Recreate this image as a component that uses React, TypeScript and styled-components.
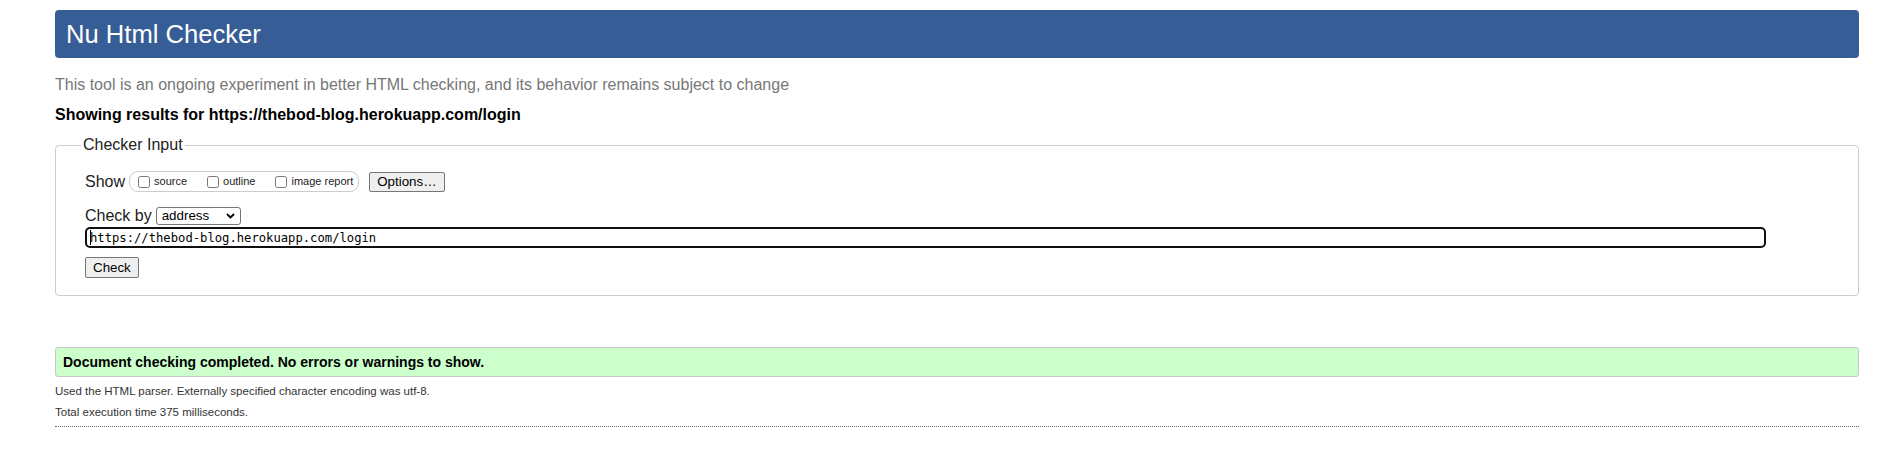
import React from "react";
import styled, { createGlobalStyle } from "styled-components";

const GlobalStyle = createGlobalStyle`
  html, body {
    margin: 0;
    padding: 0;
    background: #ffffff;
  }
  body {
    font-family: "Liberation Sans", Arial, sans-serif;
    color: #000000;
  }
`;

const Page = styled.div`
  padding: 10px 34px 0 55px;
`;

const Header = styled.h1`
  margin: 0;
  height: 48px;
  line-height: 48px;
  padding: 0 0 0 11px;
  background: #365d95;
  border-radius: 4px;
  color: #ffffff;
  font-size: 25.6px;
  font-weight: normal;
`;

const About = styled.p`
  margin: 18px 0 0;
  font-size: 16px;
  line-height: 18px;
  color: #777777;
`;

const ShowingFor = styled.p`
  margin: 12px 0 0;
  font-size: 16px;
  line-height: 18px;
  font-weight: bold;
  color: #000000;
`;

const Fieldset = styled.fieldset`
  margin: 12px 0 0;
  padding: 17px 29px 17px 29px;
  border: 1px solid #cdcdcd;
  border-radius: 4px;
  min-width: 0;
`;

const Legend = styled.legend`
  margin-left: -4px;
  padding: 0 2px;
  font-size: 16px;
  line-height: 18px;
  color: #222222;
`;

const Row = styled.div<{ $mt?: number }>`
  display: flex;
  align-items: center;
  height: 21px;
  margin-top: ${(p) => p.$mt ?? 0}px;
`;

const RowLabel = styled.span`
  font-size: 16px;
  line-height: 18px;
  color: #222222;
`;

const OptionGroup = styled.span`
  display: inline-flex;
  align-items: center;
  box-sizing: border-box;
  height: 21px;
  margin-left: 4px;
  padding: 0 5px 0 8px;
  border: 1px solid #cccccc;
  border-radius: 9px;
  gap: 20px;
`;

const OptionItem = styled.label`
  display: inline-flex;
  align-items: center;
  font-size: 11px;
  line-height: 13px;
  color: #222222;
`;

const Checkbox = styled.input.attrs({ type: "checkbox" })`
  width: 12px;
  height: 12px;
  margin: 0 4px 0 0;
`;

const Button = styled.button<{ $ml?: number; $h?: number }>`
  box-sizing: border-box;
  height: ${(p) => p.$h ?? 21}px;
  margin-left: ${(p) => p.$ml ?? 0}px;
  padding: 0 7px;
  font-family: "Liberation Sans", Arial, sans-serif;
  font-size: 13.33px;
  color: #000000;
  background: #efefef;
  border: 1px solid #767676;
  border-radius: 2px;
`;

const SelectWrap = styled.span`
  position: relative;
  display: inline-flex;
  margin-left: 4px;
`;

const Select = styled.select`
  appearance: none;
  -webkit-appearance: none;
  box-sizing: border-box;
  width: 85px;
  height: 18px;
  padding: 0 0 0 5px;
  font-family: "Liberation Sans", Arial, sans-serif;
  font-size: 13.33px;
  color: #000000;
  background: #ffffff;
  border: 1px solid #767676;
  border-radius: 3px;
`;

const Chevron = styled.svg`
  position: absolute;
  right: 6px;
  top: 6px;
  pointer-events: none;
`;

const UrlWrap = styled.div`
  position: relative;
  margin-top: 1px;
  width: 1681px;
`;

const UrlInput = styled.input`
  box-sizing: border-box;
  display: block;
  width: 100%;
  height: 21px;
  padding: 0 3px;
  font-family: "DejaVu Sans Mono", "Liberation Mono", monospace;
  font-size: 12.2px;
  color: #000000;
  background: #ffffff;
  border: 2px solid #101010;
  border-radius: 5px;
  outline: none;
`;

const Caret = styled.span`
  position: absolute;
  left: 5px;
  top: 3px;
  width: 1px;
  height: 15px;
  background: #000000;
`;

const Results = styled.section`
  margin: 51px 0 0;
`;

const Success = styled.p`
  box-sizing: border-box;
  margin: 0;
  height: 30px;
  padding: 0 7px;
  line-height: 28px;
  font-size: 14px;
  font-weight: bold;
  color: #000000;
  background: #ccffcc;
  border: 1px solid #c8c8c8;
  border-radius: 3px;
`;

const Detail = styled.p`
  margin: 7px 0 0;
  font-size: 11.5px;
  line-height: 14px;
  color: #333333;
`;

const Separator = styled.hr`
  margin: 7px 0 0;
  height: 0;
  border: 0;
  border-top: 1px dotted #666666;
`;

export default function App() {
  return (
    <>
      <GlobalStyle />
      <Page>
        <Header>Nu Html Checker</Header>
        <About>
          This tool is an ongoing experiment in better HTML checking, and its behavior remains subject to change
        </About>
        <ShowingFor>Showing results for https://thebod-blog.herokuapp.com/login</ShowingFor>
        <Fieldset>
          <Legend>Checker Input</Legend>
          <Row>
            <RowLabel>Show</RowLabel>
            <OptionGroup>
              <OptionItem>
                <Checkbox />
                source
              </OptionItem>
              <OptionItem>
                <Checkbox />
                outline
              </OptionItem>
              <OptionItem>
                <Checkbox />
                image report
              </OptionItem>
            </OptionGroup>
            <Button $ml={10} $h={20} type="button">
              Options…
            </Button>
          </Row>
          <Row $mt={13}>
            <RowLabel>Check by</RowLabel>
            <SelectWrap>
              <Select defaultValue="address">
                <option value="address">address</option>
                <option value="file">file upload</option>
                <option value="text">text input</option>
              </Select>
              <Chevron width="9" height="6" viewBox="0 0 9 6">
                <path d="M1 1 L4.5 4.5 L8 1" fill="none" stroke="#000" strokeWidth="1.8" />
              </Chevron>
            </SelectWrap>
          </Row>
          <UrlWrap>
            <UrlInput type="url" readOnly defaultValue="https://thebod-blog.herokuapp.com/login" />
            <Caret />
          </UrlWrap>
          <Row $mt={9}>
            <Button type="button">Check</Button>
          </Row>
        </Fieldset>
        <Results>
          <Success>Document checking completed. No errors or warnings to show.</Success>
          <Detail>Used the HTML parser. Externally specified character encoding was utf-8.</Detail>
          <Detail>Total execution time 375 milliseconds.</Detail>
          <Separator />
        </Results>
      </Page>
    </>
  );
}
